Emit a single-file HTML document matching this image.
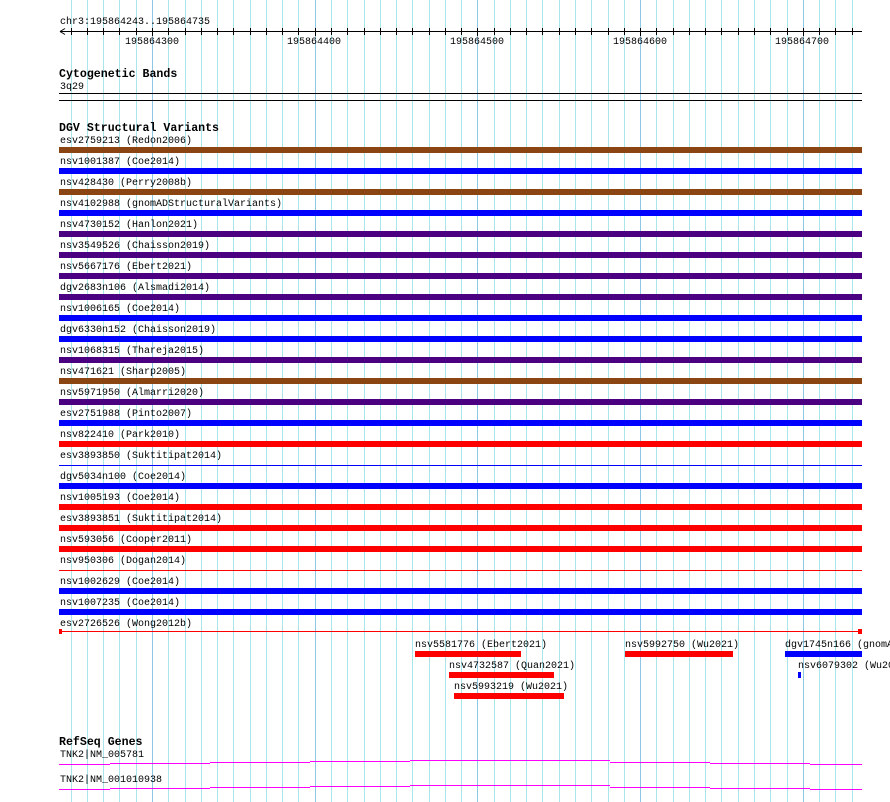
<!DOCTYPE html>
<html><head><meta charset="utf-8"><style>
html,body{margin:0;padding:0;background:#fff;}
svg{display:block}
text{font-family:"Liberation Mono",monospace;font-size:10px;fill:#000}
.h{font-weight:bold;font-size:11.6px}
</style></head><body>
<svg width="890" height="802" xmlns="http://www.w3.org/2000/svg">
<g id="grid" stroke-width="1"></g>
<text x="60" y="24">chr3:195864243..195864735</text>
<line x1="60" y1="31.5" x2="862" y2="31.5" stroke="#000"/>
<path d="M60 31.5 L65 28.5 M60 31.5 L65 34.5" stroke="#000" fill="none"/>
<g id="ticks" stroke="#000"></g>
<text x="152" y="44" text-anchor="middle">195864300</text>
<text x="314" y="44" text-anchor="middle">195864400</text>
<text x="477" y="44" text-anchor="middle">195864500</text>
<text x="640" y="44" text-anchor="middle">195864600</text>
<text x="802" y="44" text-anchor="middle">195864700</text>
<text class="h" x="59" y="77">Cytogenetic Bands</text>
<text x="60" y="89">3q29</text>
<rect x="59" y="93" width="803" height="1" fill="#000"/>
<rect x="59" y="100" width="803" height="1" fill="#000"/>
<text class="h" x="59" y="131">DGV Structural Variants</text>
<g id="rows"></g>
<text x="415" y="647">nsv5581776 (Ebert2021)</text>
<rect x="415" y="651" width="106" height="6" fill="#f00"/>
<text x="449" y="668">nsv4732587 (Quan2021)</text>
<rect x="449" y="672" width="105" height="6" fill="#f00"/>
<text x="454" y="689">nsv5993219 (Wu2021)</text>
<rect x="454" y="693" width="110" height="6" fill="#f00"/>
<text x="625" y="647">nsv5992750 (Wu2021)</text>
<rect x="625" y="651" width="108" height="6" fill="#f00"/>
<text x="785" y="647">dgv1745n166 (gnomADStructuralVariants)</text>
<rect x="785" y="651" width="77" height="6" fill="#00f"/>
<text x="798" y="668">nsv6079302 (Wu2021)</text>
<rect x="798" y="672" width="3" height="6" fill="#00f"/>
<text class="h" x="59" y="745">RefSeq Genes</text>
<text x="60" y="757">TNK2|NM_005781</text>
<text x="60" y="782">TNK2|NM_001010938</text>
<g fill="#f0f">
<rect x="59" y="764" width="51" height="1"/><rect x="110" y="763" width="100" height="1"/><rect x="210" y="762" width="100" height="1"/><rect x="310" y="761" width="100" height="1"/><rect x="410" y="760" width="200" height="1"/><rect x="610" y="762" width="100" height="1"/><rect x="710" y="763" width="100" height="1"/><rect x="810" y="764" width="52" height="1"/>
<rect x="59" y="789" width="51" height="1"/><rect x="110" y="788" width="100" height="1"/><rect x="210" y="787" width="100" height="1"/><rect x="310" y="786" width="100" height="1"/><rect x="410" y="785" width="200" height="1"/><rect x="610" y="787" width="100" height="1"/><rect x="710" y="788" width="100" height="1"/><rect x="810" y="789" width="52" height="1"/>
</g>
</svg>
<script>
var ns="http://www.w3.org/2000/svg";
function el(p,t,a){var e=document.createElementNS(ns,t);for(var k in a)e.setAttribute(k,a[k]);p.appendChild(e);return e;}
var g=document.getElementById('grid'),tk=document.getElementById('ticks');
var step=16.27;
for(var i=-6;i<=43;i++){var x=Math.round(152+i*step)+0.5;if(x<55||x>862)continue;
 var major=(i%10===0);
 el(g,'line',{x1:x,y1:0,x2:x,y2:802,stroke:major?'#8cc8e6':'#a8e6ec'});
 el(tk,'line',{x1:x,y1:28,x2:x,y2:major?36:35});}
var B='#8b4513',U='#0000ff',P='#4b0082',R='#ff0000';
var rows=[["esv2759213 (Redon2006)",B],["nsv1001387 (Coe2014)",U],["nsv428430 (Perry2008b)",B],["nsv4102988 (gnomADStructuralVariants)",U],["nsv4730152 (Hanlon2021)",P],["nsv3549526 (Chaisson2019)",P],["nsv5667176 (Ebert2021)",P],["dgv2683n106 (Alsmadi2014)",P],["nsv1006165 (Coe2014)",U],["dgv6330n152 (Chaisson2019)",U],["nsv1068315 (Thareja2015)",P],["nsv471621 (Sharp2005)",B],["nsv5971950 (Almarri2020)",P],["esv2751988 (Pinto2007)",U],["nsv822410 (Park2010)",R],["esv3893850 (Suktitipat2014)",U,1],["dgv5034n100 (Coe2014)",U],["nsv1005193 (Coe2014)",R],["esv3893851 (Suktitipat2014)",R],["nsv593056 (Cooper2011)",R],["nsv950306 (Dogan2014)",R,1],["nsv1002629 (Coe2014)",U],["nsv1007235 (Coe2014)",U],["esv2726526 (Wong2012b)",R,2]];
var rg=document.getElementById('rows');
rows.forEach(function(r,i){var y=143+21*i;var t=el(rg,'text',{x:60,y:y});t.textContent=r[0];
 var by=147+21*i;
 if(!r[2])el(rg,'rect',{x:59,y:by,width:803,height:6,fill:r[1]});
 else{el(rg,'rect',{x:59,y:by+(r[2]==2?1:3),width:803,height:1,fill:r[1]});
  if(r[2]==2){el(rg,'rect',{x:59,y:by-1,width:3,height:5,fill:r[1]});el(rg,'rect',{x:858,y:by-1,width:4,height:5,fill:r[1]});}}
});
</script>
</body></html>
